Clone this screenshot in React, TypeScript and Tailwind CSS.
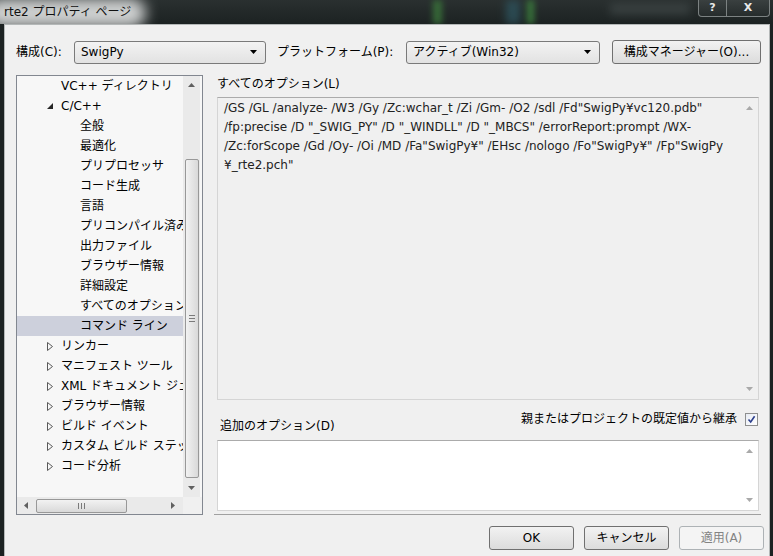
import React from 'react';

const font = "font-['DejaVu_Sans','Noto_Sans_CJK_JP',sans-serif]";

type Dir = 'up' | 'down' | 'left' | 'right';

const Arrow = ({ dir, color = '#606060' }: { dir: Dir; color?: string }) => {
  const pts: Record<Dir, string> = {
    up: '0,4 3.5,0 7,4',
    down: '0,0 7,0 3.5,4',
    left: '4,0 4,7 0,3.5',
    right: '0,0 4,3.5 0,7',
  };
  const vertical = dir === 'up' || dir === 'down';
  return (
    <svg width={vertical ? 7 : 4} height={vertical ? 4 : 7} viewBox={vertical ? '0 0 7 4' : '0 0 4 7'}>
      <polygon points={pts[dir]} fill={color} />
    </svg>
  );
};

const Caret = () => (
  <svg width="7" height="4" viewBox="0 0 7 4">
    <polygon points="0,0 7,0 3.5,4" fill="#000" />
  </svg>
);

const TitleBar = () => (
  <div className="relative h-[24px] shrink-0 overflow-hidden bg-gradient-to-b from-[#2a3030] to-[#1c2222] flex items-start justify-between">
    {/* blurred desktop behind the glass */}
    <div className="absolute left-[433px] top-0 h-full w-[9px] bg-[#3c7a3c] blur-[3px] opacity-80" />
    <div className="absolute left-[506px] top-0 h-full w-[14px] bg-[#2f5a66] blur-[4px] opacity-70" />
    <div className="absolute left-[527px] top-0 h-full w-[7px] bg-[#3f8a40] blur-[3px] opacity-80" />
    <div className="absolute left-[610px] top-[4px] h-[10px] w-[80px] bg-[#4a5252] blur-[5px] opacity-60" />
    <div className="relative h-[24px] flex items-center pl-[4px]">
      <div className="absolute -left-[14px] -top-[2px] h-[30px] w-[160px] rounded-[16px] bg-[#d6d8d8] blur-[7px] opacity-95" />
      <span className="relative text-[12px] text-[#111] leading-none">rte2 プロパティ ページ</span>
    </div>
    <div className="relative flex mr-[3px]">
      <div className="w-[29px] h-[17px] border border-[#7c8282] border-t-0 rounded-bl-[4px] bg-gradient-to-b from-[#3a4040] to-[#262c2c] flex items-center justify-center text-[11px] font-bold text-[#e8e8e8] font-['DejaVu_Sans',sans-serif]">
        ?
      </div>
      <div className="w-[43px] h-[17px] border border-l-0 border-[#7c8282] border-t-0 rounded-br-[4px] bg-gradient-to-b from-[#3a4040] to-[#262c2c] flex items-center justify-center text-[11px] font-bold text-[#e8e8e8] font-['DejaVu_Sans',sans-serif]">
        X
      </div>
    </div>
  </div>
);

const Select = ({ value, width }: { value: string; width: string }) => (
  <div className={`${width} h-[23px] rounded-[3px] border border-[#7a7a7a] bg-gradient-to-b from-[#f3f3f3] to-[#e2e2e2] flex items-center justify-between pl-[6px] pr-[8px]`}>
    <span className="whitespace-nowrap">{value}</span>
    <Caret />
  </div>
);

const Button = ({ label, width, disabled }: { label: string; width: string; disabled?: boolean }) => (
  <div
    className={`${width} h-[24px] rounded-[3px] border flex items-center justify-center whitespace-nowrap ${
      disabled
        ? 'border-[#adb2b5] bg-[#f4f4f4] text-[#838383]'
        : 'border-[#707070] bg-gradient-to-b from-[#f2f2f2] to-[#dcdcdc] text-black'
    }`}
  >
    {label}
  </div>
);

type Node = { t: string; lvl: 1 | 2; icon?: 'open' | 'closed'; sel?: boolean };

const tree: Node[] = [
  { t: 'VC++ ディレクトリ', lvl: 1 },
  { t: 'C/C++', lvl: 1, icon: 'open' },
  { t: '全般', lvl: 2 },
  { t: '最適化', lvl: 2 },
  { t: 'プリプロセッサ', lvl: 2 },
  { t: 'コード生成', lvl: 2 },
  { t: '言語', lvl: 2 },
  { t: 'プリコンパイル済みヘッダー', lvl: 2 },
  { t: '出力ファイル', lvl: 2 },
  { t: 'ブラウザー情報', lvl: 2 },
  { t: '詳細設定', lvl: 2 },
  { t: 'すべてのオプション', lvl: 2 },
  { t: 'コマンド ライン', lvl: 2, sel: true },
  { t: 'リンカー', lvl: 1, icon: 'closed' },
  { t: 'マニフェスト ツール', lvl: 1, icon: 'closed' },
  { t: 'XML ドキュメント ジェネレーター', lvl: 1, icon: 'closed' },
  { t: 'ブラウザー情報', lvl: 1, icon: 'closed' },
  { t: 'ビルド イベント', lvl: 1, icon: 'closed' },
  { t: 'カスタム ビルド ステップ', lvl: 1, icon: 'closed' },
  { t: 'コード分析', lvl: 1, icon: 'closed' },
];

const TreeIcon = ({ icon }: { icon?: 'open' | 'closed' }) => {
  if (icon === 'open')
    return (
      <svg width="6" height="6" viewBox="0 0 6 6">
        <polygon points="6,0 6,6 0,6" fill="#262626" />
      </svg>
    );
  if (icon === 'closed')
    return (
      <svg width="6" height="9" viewBox="0 0 6 9">
        <polygon points="0.5,0.5 5.5,4.5 0.5,8.5" fill="none" stroke="#595959" strokeWidth="1" />
      </svg>
    );
  return null;
};

const Tree = () => (
  <div className="w-[187px] h-[440px] border border-[#828790] bg-[#f7f7f7] flex flex-col">
    <div className="flex flex-1 min-h-0">
      <div className="w-[166px] overflow-hidden">
        {tree.map((n, i) => (
          <div key={i} className={`h-[20px] flex items-center whitespace-nowrap ${n.sel ? 'bg-[#cdd0dc]' : ''}`}>
            {n.lvl === 1 ? (
              <>
                <div className="w-[44px] shrink-0 flex justify-start pl-[30px]">
                  <TreeIcon icon={n.icon} />
                </div>
                <span>{n.t}</span>
              </>
            ) : (
              <>
                <div className="w-[63px] shrink-0" />
                <span>{n.t}</span>
              </>
            )}
          </div>
        ))}
      </div>
      {/* vertical scrollbar */}
      <div className="w-[17px] bg-[#eaeaea] flex flex-col items-center">
        <div className="h-[17px] flex items-center justify-center">
          <Arrow dir="up" />
        </div>
        <div className="mt-[66px] h-[319px] w-[14px] rounded-[2px] border border-[#989898] bg-gradient-to-r from-[#f2f2f2] to-[#d9d9d9] flex flex-col items-center justify-center gap-[2px]">
          <div className="w-[6px] h-px bg-[#7a7a7a]" />
          <div className="w-[6px] h-px bg-[#7a7a7a]" />
          <div className="w-[6px] h-px bg-[#7a7a7a]" />
        </div>
        <div className="flex-1 flex items-center justify-center">
          <Arrow dir="down" />
        </div>
      </div>
    </div>
    {/* horizontal scrollbar */}
    <div className="h-[17px] flex">
      <div className="w-[166px] bg-[#eaeaea] flex items-center">
        <div className="w-[17px] flex justify-center">
          <Arrow dir="left" />
        </div>
        <div className="ml-[2px] w-[91px] h-[14px] rounded-[2px] border border-[#989898] bg-gradient-to-b from-[#f2f2f2] to-[#d9d9d9] flex items-center justify-center gap-[2px]">
          <div className="w-px h-[6px] bg-[#7a7a7a]" />
          <div className="w-px h-[6px] bg-[#7a7a7a]" />
          <div className="w-px h-[6px] bg-[#7a7a7a]" />
        </div>
        <div className="flex-1 flex justify-end pr-[8px]">
          <Arrow dir="right" />
        </div>
      </div>
      <div className="flex-1 bg-[#f0f0f0]" />
    </div>
  </div>
);

const optionLines = [
  '/GS /GL /analyze- /W3 /Gy /Zc:wchar_t /Zi /Gm- /O2 /sdl /Fd"SwigPy¥vc120.pdb"',
  '/fp:precise /D "_SWIG_PY" /D "_WINDLL" /D "_MBCS" /errorReport:prompt /WX-',
  '/Zc:forScope /Gd /Oy- /Oi /MD /Fa"SwigPy¥" /EHsc /nologo /Fo"SwigPy¥" /Fp"SwigPy',
  '¥_rte2.pch"',
];

const TextScroll = () => (
  <div className="w-[17px] flex flex-col items-center justify-between py-[8px]">
    <Arrow dir="up" color="#a9a9a9" />
    <Arrow dir="down" color="#a9a9a9" />
  </div>
);

export default function App() {
  return (
    <div className={`w-[773px] h-[556px] overflow-hidden bg-[#1c2222] flex flex-col text-[12px] text-black ${font}`}>
      <TitleBar />
      <div className="flex-1 ml-[4px] mr-[3px] border-l border-t border-r border-[#b4b8b8] bg-[#f0f0f0] flex flex-col">
        {/* configuration row */}
        <div className="mt-[15px] pl-[11px] flex items-center">
          <span className="w-[58px] whitespace-nowrap">構成(C):</span>
          <Select value="SwigPy" width="w-[192px]" />
          <span className="ml-[11px] w-[129px] whitespace-nowrap">プラットフォーム(P):</span>
          <Select value="アクティブ(Win32)" width="w-[194px]" />
          <div className="ml-[12px]">
            <Button label="構成マネージャー(O)..." width="w-[149px]" />
          </div>
        </div>

        {/* main area */}
        <div className="mt-[11px] pl-[11px] flex">
          <Tree />
          <div className="ml-[14px] w-[542px] flex flex-col">
            <div className="h-[22px] pt-[1px] leading-[16px]">すべてのオプション(L)</div>
            <div className="h-[303px] border border-[#d5d5d5] border-t-[#ababab] bg-[#f0f0f0] flex">
              <div className="flex-1 pl-[6px] pt-[1px] leading-[19px] text-[#222] overflow-hidden">
                {optionLines.map((l, i) => (
                  <div key={i} className="whitespace-nowrap">
                    {l}
                  </div>
                ))}
              </div>
              <TextScroll />
            </div>
            <div className="h-[40px] flex justify-between">
              <div className="self-end pb-[6px] leading-[16px] pl-[3px]">追加のオプション(D)</div>
              <div className="mt-[12px] h-[14px] flex items-center gap-[8px] pr-[1px]">
                <span className="whitespace-nowrap leading-[14px]">親またはプロジェクトの既定値から継承</span>
                <div className="w-[13px] h-[13px] border border-[#8e8f8f] bg-gradient-to-br from-[#e8ecf4] to-[#ffffff] flex items-center justify-center">
                  <svg width="9" height="9" viewBox="0 0 9 9">
                    <path d="M1.5 4.5 L3.7 7 L7.6 1.2" fill="none" stroke="#2c3f8c" strokeWidth="1.6" />
                  </svg>
                </div>
              </div>
            </div>
            <div className="h-[71px] border border-[#d5d5d5] border-t-[#ababab] bg-white flex">
              <div className="flex-1" />
              <TextScroll />
            </div>
            <div className="mt-[3px] -ml-[3px] w-[547px] h-px bg-[#a0a0a0]" />
          </div>
        </div>

        {/* dialog buttons */}
        <div className="mt-[11px] pr-[5px] flex justify-end gap-[10px]">
          <Button label="OK" width="w-[85px]" />
          <Button label="キャンセル" width="w-[85px]" />
          <Button label="適用(A)" width="w-[85px]" disabled />
        </div>
      </div>
    </div>
  );
}
